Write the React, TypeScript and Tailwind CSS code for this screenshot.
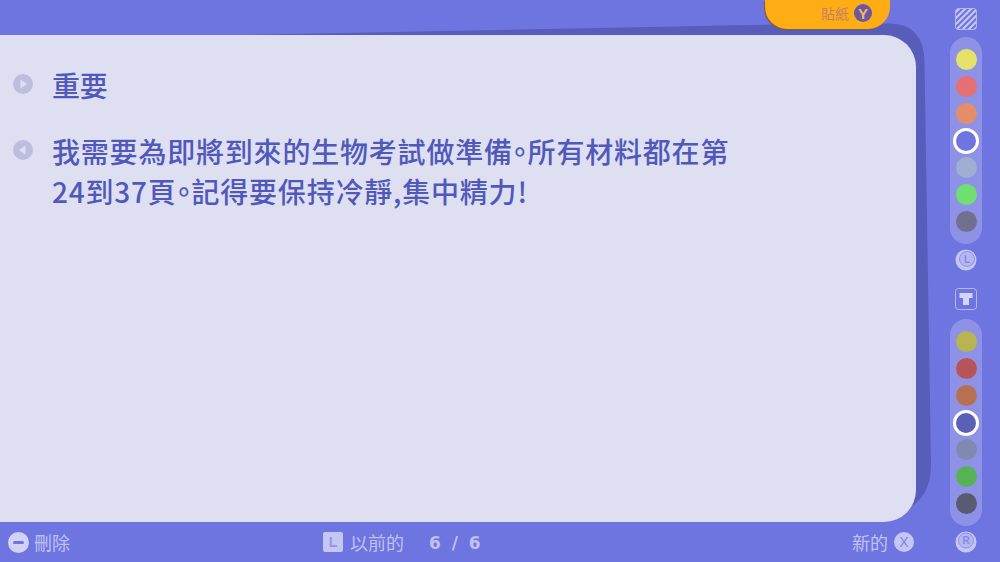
const cjk = "font-['Noto_Sans_CJK_TC','Noto_Sans',sans-serif]";

const topColors = ['#e4e268', '#e56f72', '#e58d68', 'ring', '#a0aed2', '#6fe06f', '#71718f'];
const bottomColors = ['#b8b452', '#b85458', '#b87052', 'ring', '#8089b0', '#55b355', '#5a5a72'];

function Swatches({ colors, ringClass }: { colors: string[]; ringClass: string }) {
  return (
    <div className="flex h-[207px] w-8 flex-col items-center rounded-full bg-[#8e92e6] pt-3">
      {colors.map((c, i) =>
        c === 'ring' ? (
          <div key={i} className={`-mt-[2px] mb-[3px] h-[26px] w-[26px] shrink-0 rounded-full border-[3.500px] border-white ${ringClass}`} />
        ) : (
          <div key={i} className="mb-1.5 h-[21px] w-[21px] shrink-0 rounded-full" style={{ backgroundColor: c }} />
        ),
      )}
    </div>
  );
}

function Coin({ letter, flip }: { letter: string; flip?: boolean }) {
  return (
    <svg width="22" height="22" viewBox="0 0 22 22">
      <circle cx="11" cy="11" r="10.5" fill="#c5c7f3" />
      <circle cx={flip ? 11 : 12} cy={flip ? 9.5 : 10} r="7.5" fill="#b4b7f0" stroke="#8e92e6" strokeWidth="1" />
      <text x={flip ? 11 : 12} y={flip ? 13 : 13.5} textAnchor="middle" fontSize="10" fontWeight="700" fill="#8389e4" fontFamily="Liberation Sans, sans-serif">
        {letter}
      </text>
    </svg>
  );
}

function Sidebar() {
  return (
    <div className="flex w-[68px] shrink-0 flex-col items-center pt-2">
      <svg width="22" height="22" viewBox="0 0 22 22" className="shrink-0">
        <defs>
          <clipPath id="hatch">
            <rect x="0.5" y="0.5" width="21" height="21" rx="3" />
          </clipPath>
        </defs>
        <g clipPath="url(#hatch)" stroke="#c5c7f3" strokeWidth="2.2">
          <path d="M-2 7 L7 -2 M-2 13 L13 -2 M-2 19 L19 -2 M-2 25 L25 -2 M4 25 L25 4 M10 25 L25 10 M16 25 L25 16" />
        </g>
        <rect x="0.5" y="0.5" width="21" height="21" rx="3" fill="none" stroke="#b4b7f0" strokeWidth="1" />
      </svg>
      <div className="mt-[7px]">
        <Swatches colors={topColors} ringClass="bg-[#6f75e0]" />
      </div>
      <div className="mt-[5px]">
        <Coin letter="L" />
      </div>
      <svg width="22" height="22" viewBox="0 0 22 22" className="mt-[17px]">
        <rect x="0.5" y="0.5" width="21" height="21" rx="3" fill="none" stroke="#b4b7f0" strokeWidth="1" />
        <path d="M4.5 5 H17.5 V10 H14 V17 H8 V10 H4.5 Z" fill="#d3d5f6" />
      </svg>
      <div className="mt-[9px]">
        <Swatches colors={bottomColors} ringClass="bg-[#5a5fb8]" />
      </div>
      <div className="mt-[5px]">
        <Coin letter="R" flip />
      </div>
    </div>
  );
}

function Note({ dir, children, className }: { dir: 'next' | 'prev'; children: React.ReactNode; className?: string }) {
  return (
    <div className={`flex ${className ?? ''}`}>
      <div className="mt-[9px] flex h-5 w-5 shrink-0 items-center justify-center rounded-full bg-[#bdbedf]">
        <svg width="12" height="12" viewBox="0 0 12 12">
          <path d={dir === 'next' ? 'M3.5 1.5 L10 6 L3.5 10.5 Z' : 'M8.5 1.5 L2 6 L8.5 10.5 Z'} fill="#dedff0" />
        </svg>
      </div>
      <div className="ml-[19px] text-[28px] leading-[40px] font-medium text-[#5059bb] [font-feature-settings:'palt']">
        {children}
      </div>
    </div>
  );
}

export default function App() {
  return (
    <div className={`relative flex h-[562px] w-[1000px] overflow-hidden bg-[#6f75e0] ${cjk}`}>
      {/* shadow behind the page, slants away to the left */}
      <svg width="1000" height="562" className="absolute top-0 left-0">
        <path d="M240 35 L750 25 Q800 23.500 890 23.500 Q924 24 924.500 62 L931 465 Q931 498 905 510 H240 Z" fill="#585dba" />
      </svg>

      <div className="relative flex w-[932px] shrink-0 flex-col">
        <div className="h-[35px] shrink-0" />

        {/* sticker tab */}
        <div className="absolute top-0 left-[765px] flex h-[29px] w-[125px] items-center justify-end gap-[5px] rounded-b-[22px] bg-[#ffad14] pr-[18px] pb-[3px] shadow-[-1px_1px_0_#7d5f38]">
          <span className="text-[14px] leading-none text-[#c8806a]">貼紙</span>
          <span className="flex h-[18px] w-[18px] items-center justify-center rounded-full bg-[#6b56a8] font-['Liberation_Sans',sans-serif] text-[15px] leading-none font-bold text-[#f5b94f]">
            Y
          </span>
        </div>

        <div className="relative h-[487px] w-[916px] shrink-0 rounded-r-[32px] bg-[#dedff0] pt-[30px] pl-[13px]">
          <Note dir="next">
            <div className="tracking-[-0.2px]">重要</div>
          </Note>
          <Note dir="prev" className="mt-[26px]">
            <div className="w-[690px] pt-[1px] leading-[39.500px] tracking-[0.8px]">
              我需要為即將到來的生物考試做準備。所有材料都在第24到37頁。記得要保持冷靜,集中精力!
            </div>
          </Note>
        </div>

        <div className="flex h-10 shrink-0 items-center text-[18px] leading-none text-[#bfc1f3]">
          <div className="flex w-[323px] shrink-0 items-center pl-2">
            <div className="flex h-[21px] w-[21px] items-center justify-center rounded-full bg-[#d0d2f6]">
              <div className="h-[3px] w-[11px] rounded-sm bg-[#6f75e0]" />
            </div>
            <span className="ml-[5px]">刪除</span>
          </div>
          <div className="flex items-center">
            <div className="flex h-5 w-5 items-center justify-center rounded-[2px] bg-[#c5c7f3] font-['Liberation_Sans',sans-serif] text-[14px] font-bold text-[#9296e8]">
              L
            </div>
            <span className="ml-[7px]">以前的</span>
            <span className="mt-[2px] ml-[25px] font-['DejaVu_Sans',sans-serif] text-[17px] font-bold tracking-[2.5px] whitespace-pre">6 / 6</span>
          </div>
          <div className="ml-auto flex items-center gap-[6px] pr-[18px]">
            <span>新的</span>
            <div className="flex h-5 w-5 items-center justify-center rounded-full bg-[#c5c7f3] font-['Liberation_Sans',sans-serif] text-[14px] text-[#7f85e4]">
              X
            </div>
          </div>
        </div>
      </div>

      <div className="relative">
        <Sidebar />
      </div>
    </div>
  );
}
